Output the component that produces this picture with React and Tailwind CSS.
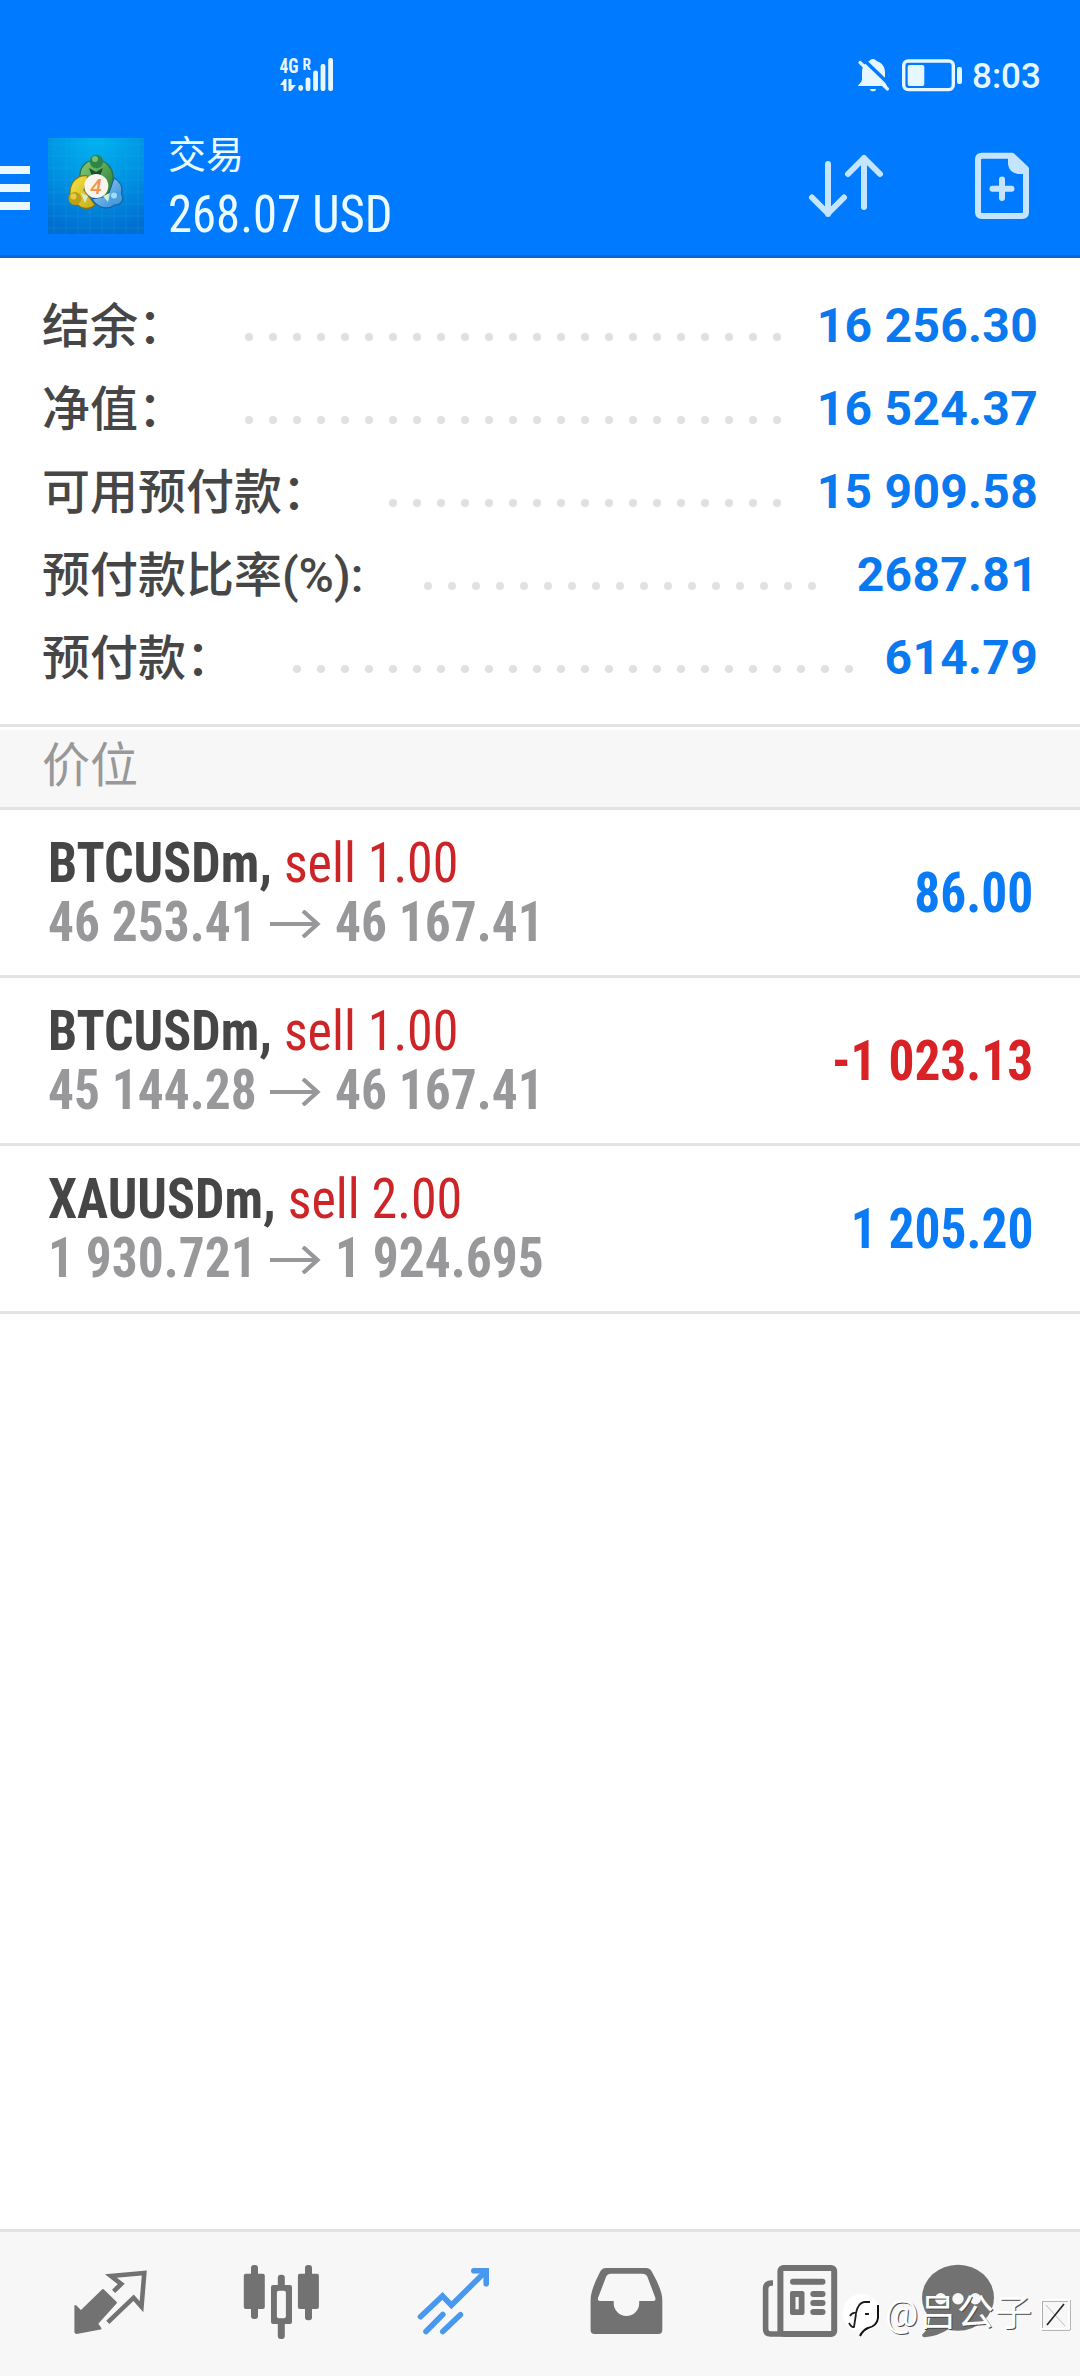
import React from "react";

const summary = [
  { label: "结余：", value: "16 256.30", dots: 23, width: "w-[257px]" },
  { label: "净值：", value: "16 524.37", dots: 23, width: "w-[257px]" },
  { label: "可用预付款：", value: "15 909.58", dots: 17, width: "w-[257px]" },
  { label: "预付款比率(%):", value: "2687.81", dots: 17, width: "w-[222px]" },
  { label: "预付款：", value: "614.79", dots: 24, width: "w-[185px]" },
];

const positions = [
  { symbol: "BTCUSDm", side: "sell 1.00", open: "46 253.41", price: "46 167.41", profit: "86.00" },
  { symbol: "BTCUSDm", side: "sell 1.00", open: "45 144.28", price: "46 167.41", profit: "-1 023.13" },
  { symbol: "XAUUSDm", side: "sell 2.00", open: "1 930.721", price: "1 924.695", profit: "1 205.20" },
];

const StatusBar = () => (
  <div className="flex h-[130px] items-start pt-[50px] text-[#e6f7ff]">
    <svg className="ml-[278px] h-[42px] w-14 shrink-0" viewBox="0 -6 56 42" fill="currentColor">
      <text x="1.5" y="16.5" className="font-['Roboto_Condensed'] text-[20px] font-bold" textLength="19" lengthAdjust="spacingAndGlyphs">4G</text>
      <text x="24.5" y="14" className="font-['Roboto_Condensed'] text-[17px] font-bold" textLength="8.5" lengthAdjust="spacingAndGlyphs">R</text>
      <path d="M2 29 L6.5 23 H8.5 V35 H5.5 V29 Z M10.5 23 H13.5 V29 H18 L13 35 H10.5 Z" />
      <rect x="20.3" y="29" width="4.8" height="6" rx="2.4" />
      <rect x="27.6" y="21.5" width="4.8" height="13.5" rx="2" />
      <rect x="35.2" y="14.6" width="4.8" height="20.4" rx="2" />
      <rect x="42.6" y="8" width="4.8" height="27" rx="2" />
      <rect x="50.2" y="2" width="4.8" height="33" rx="2" />
    </svg>
    <svg className="mt-1.5 ml-[522px] h-9 w-9 shrink-0" viewBox="0 0 36 36" fill="currentColor">
      <path d="M17 3 C19 3 20 4 20.5 5 C26 6.5 29 11 29 16 V26 L31 30 H3 L2 30 C2 28 6 27 6 23 V16 C6 11 9 6.5 13.5 5 C14 4 15 3 17 3 Z" />
      <path d="M14 33 H20 C20 34.5 18.5 35.3 17 35.3 C15.5 35.3 14 34.5 14 33 Z" />
      <path d="M6 2 L35 30" stroke="#007aff" strokeWidth="3.5" />
      <path d="M4 6.5 L31.5 33" stroke="currentColor" strokeWidth="3.2" strokeLinecap="round" />
    </svg>
    <svg className="mt-1.5 ml-2 h-9 w-16 shrink-0" viewBox="0 0 64 36" fill="currentColor">
      <rect x="3.7" y="5" width="49.6" height="28.6" rx="4.5" fill="none" stroke="currentColor" strokeWidth="3.4" />
      <rect x="7.7" y="9" width="16.6" height="21" rx="2" />
      <rect x="57" y="11" width="5" height="17" rx="2" />
    </svg>
    <span className="mt-[7px] ml-2 font-[Roboto] text-[35px] leading-[40px] font-medium">8:03</span>
  </div>
);

const AppLogo = () => (
  <svg className="mt-2 ml-[18px] h-24 w-24 shrink-0" viewBox="0 0 96 96">
    <defs>
      <radialGradient id="sky" cx="0.5" cy="0" r="1">
        <stop offset="0" stopColor="#00b4f0" />
        <stop offset="0.55" stopColor="#0092e2" />
        <stop offset="1" stopColor="#006fd0" />
      </radialGradient>
      <linearGradient id="green" x1="0" y1="0" x2="1" y2="1">
        <stop offset="0" stopColor="#8ccb7c" />
        <stop offset="1" stopColor="#1f7a2e" />
      </linearGradient>
      <linearGradient id="yellow" x1="0" y1="0" x2="1" y2="1">
        <stop offset="0" stopColor="#f6e648" />
        <stop offset="1" stopColor="#c9ab18" />
      </linearGradient>
      <linearGradient id="blue" x1="0" y1="0" x2="1" y2="1">
        <stop offset="0" stopColor="#9bd6fa" />
        <stop offset="1" stopColor="#2e86d4" />
      </linearGradient>
    </defs>
    <rect width="96" height="96" fill="url(#sky)" />
    <path
      d="M6 0V96M18 0V96M30 0V96M42 0V96M54 0V96M66 0V96M78 0V96M90 0V96M0 6H96M0 18H96M0 30H96M0 42H96M0 54H96M0 66H96M0 78H96M0 90H96"
      stroke="#35b4ee"
      strokeOpacity="0.18"
    />
    <path d="M32 40 C31 28 39 22 48 22 C58 22 66 30 65 42 C65 50 62 56 57 59 L37 44 Z" fill="url(#green)" stroke="#2c6e3a" strokeWidth="1.2" />
    <path d="M40 38 C30 36 22 44 22 55 C19 62 23 67 30 67 C35 72 43 71 47 67 L36 52 Z" fill="url(#yellow)" stroke="#7c741c" strokeWidth="1.2" />
    <path d="M66 40 C72 43 75 49 73.5 56 C77 62 73 67 67 67 C60 72 50 71 44 61 L60 58 Z" fill="url(#blue)" stroke="#1c5fa0" strokeWidth="1.2" />
    <path d="M41 30 L48 34 L55 30 L52 38 H44 Z" fill="#174f2c" />
    <path d="M33 55 L40 58 L37 65 Z M62 55 L55 58 L60 64 Z" fill="#d8ecd0" />
    <circle cx="48.5" cy="23.5" r="6.8" fill="#2f8546" />
    <circle cx="47" cy="21" r="3" fill="#72bd80" />
    <circle cx="27" cy="60.5" r="6.4" fill="#bd9f18" />
    <circle cx="25.5" cy="58.5" r="3" fill="#e5cd4a" />
    <circle cx="67.5" cy="59.5" r="6" fill="#4a9fe0" />
    <circle cx="66" cy="57.5" r="3" fill="#a5daf8" />
    <circle cx="48.3" cy="48" r="12" fill="#f8f4ee" />
    <text x="48" y="55.5" textAnchor="middle" className="font-[Roboto] text-[21px] font-medium italic" fill="#f3954a">4</text>
  </svg>
);

const Toolbar = () => (
  <div className="flex h-[125px] items-start">
    <svg className="mt-9 h-11 w-[30px] shrink-0" viewBox="0 0 30 44" fill="#ebf9ff">
      <rect y="0" width="30" height="8" />
      <rect y="18" width="30" height="8" />
      <rect y="36" width="30" height="8" />
    </svg>
    <AppLogo />
    <div className="ml-6 flex w-[620px] flex-col whitespace-nowrap text-[#ebfbff]">
      <span className="text-[38px] leading-[50px]">交易</span>
      <span className="mt-[5px] origin-left scale-x-[0.955] font-['Roboto_Condensed'] text-[51px] leading-[60px] font-[450]">268.07 USD</span>
    </div>
    <svg className="mt-5 ml-5 h-[72px] w-20 shrink-0" viewBox="0 0 80 72" fill="none" stroke="#c5e5ff" strokeWidth="6" strokeLinecap="round" strokeLinejoin="round">
      <path d="M20 14 V64 M4 47.5 L20 63.5 L36 47.5" />
      <path d="M56 57 V8 M40 24 L56 8 L72 24" />
    </svg>
    <svg className="mt-5 ml-[86px] h-[72px] w-[60px] shrink-0" viewBox="0 0 60 72" fill="none" stroke="#c5e5ff" strokeWidth="6" strokeLinecap="round" strokeLinejoin="round">
      <path d="M8 5.7 H38 L52 19 V62 Q52 66 48 66 H8 Q4 66 4 62 V9.7 Q4 5.7 8 5.7 Z" />
      <path d="M35 6 V14 Q36 22 44 23 H53 L38 6 Z" fill="#c5e5ff" strokeWidth="2" />
      <path d="M28 29.5 V48 M18.5 38.7 H37.5" />
    </svg>
  </div>
);

const SummaryRow = ({ label, value, dots, width }) => (
  <div className="flex h-[83px] items-center pr-[42px] pl-[42px]">
    <span className="pt-0.5 text-[48px] leading-[60px] font-medium text-[#464646]">{label}</span>
    <div className="mt-[22px] ml-auto flex gap-4">
      {Array.from({ length: dots }, (_, i) => (
        <span key={i} className="h-2 w-2 rounded-full bg-[#e1e1e1]" />
      ))}
    </div>
    <span className={`${width} text-right text-[48px] leading-[60px] font-bold tracking-[0.3px] text-[#0a78ee]`}>
      {value}
    </span>
  </div>
);

const PositionRow = ({ symbol, side, open, price, profit }) => (
  <div className="flex h-[168px] items-start justify-between border-b-[3px] border-[#e3e3e3] pr-[47px] pl-12 font-['Roboto_Condensed'] text-[55px] leading-[59px] font-bold whitespace-nowrap">
    <div className="pt-6">
      <div className="origin-left scale-x-[0.945] text-[#464646]">
        {symbol}, <span className="font-normal text-[#cd2428]">{side}</span>
      </div>
      <div className="flex items-center text-[#98989b]">
        <span className="w-[221px] origin-left scale-x-[0.935]">{open}</span>
        <svg className="mt-[3px] h-7 w-[52px]" viewBox="0 0 52 28" fill="none" stroke="currentColor" strokeWidth="4.2">
          <path d="M1 14 H48 M34 1 L48.5 14 L34 27" />
        </svg>
        <span className="ml-[14px] origin-left scale-x-[0.935]">{price}</span>
      </div>
    </div>
    <span className={`mt-[54px] origin-right scale-x-[0.935] ${profit.startsWith("-") ? "text-[#d92226]" : "text-[#0a7af5]"}`}>
      {profit}
    </span>
  </div>
);

const QuotesIcon = () => (
  <svg className="h-36 w-[172px]" viewBox="0 0 172 144">
    <path d="M89.6 59.3 L97.2 52 L86.9 44 L120.3 41 L117.5 74.7 L109.6 65.7 L83.8 90.3" fill="none" stroke="#727272" strokeWidth="4.6" strokeLinejoin="miter" />
    <path d="M79 58 L92 70.7 L73.1 91.7 L76.5 96.5 L52.4 101 L51.4 100 V74 L56.9 79.5 Z" fill="#727272" stroke="#727272" strokeWidth="2" strokeLinejoin="round" />
  </svg>
);

const ChartIcon = () => (
  <svg className="h-36 w-[172px]" viewBox="0 0 172 144" fill="#727272">
    <rect x="55" y="33" width="7" height="54" rx="3" />
    <rect x="47.8" y="41.7" width="21" height="35.3" rx="2" />
    <rect x="81.8" y="42.7" width="7" height="64.3" rx="3" />
    <rect x="75" y="53" width="21" height="39" rx="2" />
    <rect x="80.9" y="58.7" width="9" height="27.6" rx="2" fill="#f7f7f7" />
    <rect x="109" y="33" width="7" height="55.3" rx="3" />
    <rect x="101.9" y="41.7" width="21" height="35.3" rx="2" />
  </svg>
);

const TradeIcon = () => (
  <svg className="h-36 w-[172px]" viewBox="0 0 172 144" fill="none" stroke="#4798ee" strokeWidth="5.6" strokeLinecap="round">
    <path d="M52.5 84.7 L74.5 64 L83.4 73.3 L117 40" />
    <path d="M105.8 38.7 H118.2 V51.7" />
    <path d="M58 99.5 L74.8 82.5 M74.8 99.5 L92.4 82.7" />
  </svg>
);

const InboxIcon = () => (
  <svg className="h-36 w-[172px]" viewBox="0 0 172 144" fill="#727272">
    <path d="M66 36 H106 Q110 36 112 40 Q122.3 58 122.3 68 V98 Q122.3 102 118.3 102 H54.6 Q50.6 102 50.6 98 V68 Q50.6 58 60 40 Q62 36 66 36 Z" />
    <path d="M71 41.7 H102 Q106 41.7 107.5 45 L115.4 66 Q116 69 113.5 69 H99.2 V71.3 A12.75 12.75 0 0 1 73.7 71.3 V69 H59.8 Q57.3 69 58 66 L66 45 Q67.5 41.7 71 41.7 Z" fill="#f7f7f7" />
  </svg>
);

const NewsIcon = () => (
  <svg className="h-36 w-[172px]" viewBox="0 0 172 144" fill="#727272">
    <path d="M61 51 H59.6 Q53.6 51 53.6 57 V97 Q53.6 102 58.6 102 H70" fill="none" stroke="#727272" strokeWidth="5.6" />
    <rect x="68.4" y="36" width="53.8" height="66" rx="3" fill="#f7f7f7" stroke="#727272" strokeWidth="6" />
    <rect x="78" y="46.7" width="35.5" height="6" rx="3" />
    <rect x="78" y="59" width="14.5" height="24" rx="2" />
    <rect x="83.5" y="65" width="3.2" height="12.3" fill="#f7f7f7" />
    <rect x="98.3" y="59" width="15.2" height="6" rx="3" />
    <rect x="98.3" y="68" width="15.2" height="6" rx="3" />
    <rect x="98.3" y="77" width="15.2" height="6" rx="3" />
  </svg>
);

const ChatIcon = () => (
  <svg className="h-36 w-[172px]" viewBox="0 0 172 144" fill="#727272">
    <ellipse cx="74" cy="65.7" rx="36" ry="33" />
    <path d="M46 86 Q45 97 38.3 102.5 Q37.5 105.3 41 105.3 Q54 104 64 97.5 Z" />
    <circle cx="56.7" cy="66.7" r="5.7" fill="#f7f7f7" />
    <circle cx="74" cy="66.7" r="5.7" fill="#f7f7f7" />
    <circle cx="91.3" cy="66.7" r="5.7" fill="#f7f7f7" />
  </svg>
);

const Watermark = () => (
  <div className="absolute right-0 bottom-[38px] flex h-12 w-[240px] items-center">
    <svg className="h-12 w-[45px] shrink-0" viewBox="0 0 45 48" fill="none">
      <circle cx="21.5" cy="23" r="19" fill="#fff" />
      <path d="M9 33 Q12 38 14 37 L16 24 M10 26 Q12 22 16 23 Q18 13 24 12 H30 M25 24 H29" stroke="#1c1c1c" strokeWidth="1.8" />
      <path d="M38 15 V28 Q37 36 28 38 Q23 40 20 46" stroke="#111" strokeWidth="2" />
    </svg>
    <span className="text-[37px] leading-[48px] tracking-[0.9px] whitespace-nowrap text-white [text-shadow:1px_1px_0_#4a4a4a]">
      @吕公子
    </span>
    <svg className="mr-[9px] ml-auto h-9 w-8 shrink-0" viewBox="0 0 32 36" fill="none">
      <path d="M3 34 H31 V4 M3.5 33 V5 H29" stroke="#777" strokeWidth="1" />
      <rect x="2.5" y="4" width="27.5" height="29" stroke="#fff" strokeWidth="1.8" />
      <path d="M7 9 L26 30" stroke="#aaa" strokeWidth="0.8" />
      <path d="M25 8 L8 29" stroke="#222" strokeWidth="1.6" />
    </svg>
  </div>
);

const App = () => {
  return (
    <div className="relative flex h-[2376px] w-[1080px] flex-col overflow-hidden bg-white font-[Roboto,'Noto_Sans_CJK_SC',sans-serif]">
      <header className="shrink-0 border-b-[3px] border-[#0868ce] bg-[#007aff]">
        <StatusBar />
        <Toolbar />
      </header>

      {/* Account summary */}
      <section className="border-b-[3px] border-[#e3e3e3] pt-[26px] pb-[25px]">
        {summary.map((row) => (
          <SummaryRow key={row.label} {...row} />
        ))}
      </section>

      <div className="mt-[3px] h-20 shrink-0 border-b-[3px] border-[#e3e3e3] bg-[#f7f7f7] pl-[42px] text-[48px] leading-[72px] text-[#98989a]">
        价位
      </div>

      {/* Open positions */}
      <main className="flex-1">
        {positions.map((row, i) => (
          <PositionRow key={i} {...row} />
        ))}
      </main>

      <nav className="flex h-[147px] shrink-0 border-t-[3px] border-[#e3e3e3] bg-[#f7f7f7] px-6">
        <QuotesIcon />
        <ChartIcon />
        <TradeIcon />
        <InboxIcon />
        <NewsIcon />
        <ChatIcon />
      </nav>

      <Watermark />
    </div>
  );
};

export default App;
